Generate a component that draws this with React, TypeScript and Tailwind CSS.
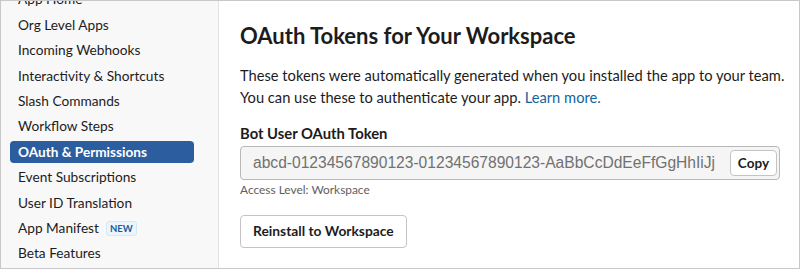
const navItems = [
  'App Home',
  'Org Level Apps',
  'Incoming Webhooks',
  'Interactivity & Shortcuts',
  'Slash Commands',
  'Workflow Steps',
  'OAuth & Permissions',
  'Event Subscriptions',
  'User ID Translation',
  'App Manifest',
  'Beta Features',
];

export default function App() {
  return (
    <div
      className="flex h-[269px] w-[800px] overflow-hidden border border-[#c8c8c8] bg-white text-[#1d1c1d]"
      style={{ fontFamily: 'Lato, "Noto Sans", sans-serif' }}
    >
      {/* Sidebar */}
      <div className="w-[218px] shrink-0 border-r border-[#e2e2e2] bg-[#f8f8f8]">
        <div className="-mt-[12.3px] flex flex-col gap-[3.4px]">
          {navItems.map(item => {
            const active = item === 'OAuth & Permissions';
            return (
              <div
                key={item}
                className={
                  active
                    ? 'ml-[9px] mr-[24px] flex h-[22px] items-center rounded-[4px] bg-[#2c5d9f] px-[8px] text-[13.6px] font-bold text-white'
                    : 'ml-[9px] mr-[24px] flex h-[22px] items-center px-[8px] text-[13.7px] text-[#1d1c1d]'
                }
              >
                {item}
                {item === 'App Manifest' && (
                  <span className="ml-[7px] rounded-[3px] border border-[#d2e8f5] bg-[#eaf5fc] px-[3px] text-[9.5px] leading-[13px] font-bold text-[#1d5c99]">
                    NEW
                  </span>
                )}
              </div>
            );
          })}
        </div>
      </div>

      {/* Main */}
      <div className="flex-1 pl-[21px] pt-[21px]">
        <h1 className="text-[22px] leading-[28px] font-bold">OAuth Tokens for Your Workspace</h1>
        <p className="mt-[14px] text-[14.7px] leading-[22px]">
          These tokens were automatically generated when you installed the app to your team.
          <br />
          You can use these to authenticate your app.{' '}
          <a className="text-[#1264a3]">Learn more.</a>
        </p>
        <div className="mt-[16px] text-[14.8px] leading-[18px] font-bold">Bot User OAuth Token</div>
        <div className="mt-[4px] flex h-[34px] w-[540px] items-center justify-between rounded-[4px] border border-[#b8b8b8] bg-[#f5f5f5] pl-[12px] pr-[2px]">
          <span
            className="whitespace-nowrap text-[15.6px] text-[#717171]"
            style={{ fontFamily: '"Liberation Sans", Arial, sans-serif' }}
          >
            abcd-01234567890123-01234567890123-AaBbCcDdEeFfGgHhIiJj
          </span>
          <button className="h-[26px] shrink-0 rounded-[4px] border border-[#c4c4c4] bg-white px-[7px] text-[13.5px] font-bold">
            Copy
          </button>
        </div>
        <div className="mt-[3px] text-[11.9px] leading-[14px] text-[#616061]">Access Level: Workspace</div>
        <button className="mt-[18px] h-[33px] rounded-[4px] border border-[#c4c4c4] bg-white px-[12px] text-[13.8px] font-bold">
          Reinstall to Workspace
        </button>
      </div>
    </div>
  );
}
